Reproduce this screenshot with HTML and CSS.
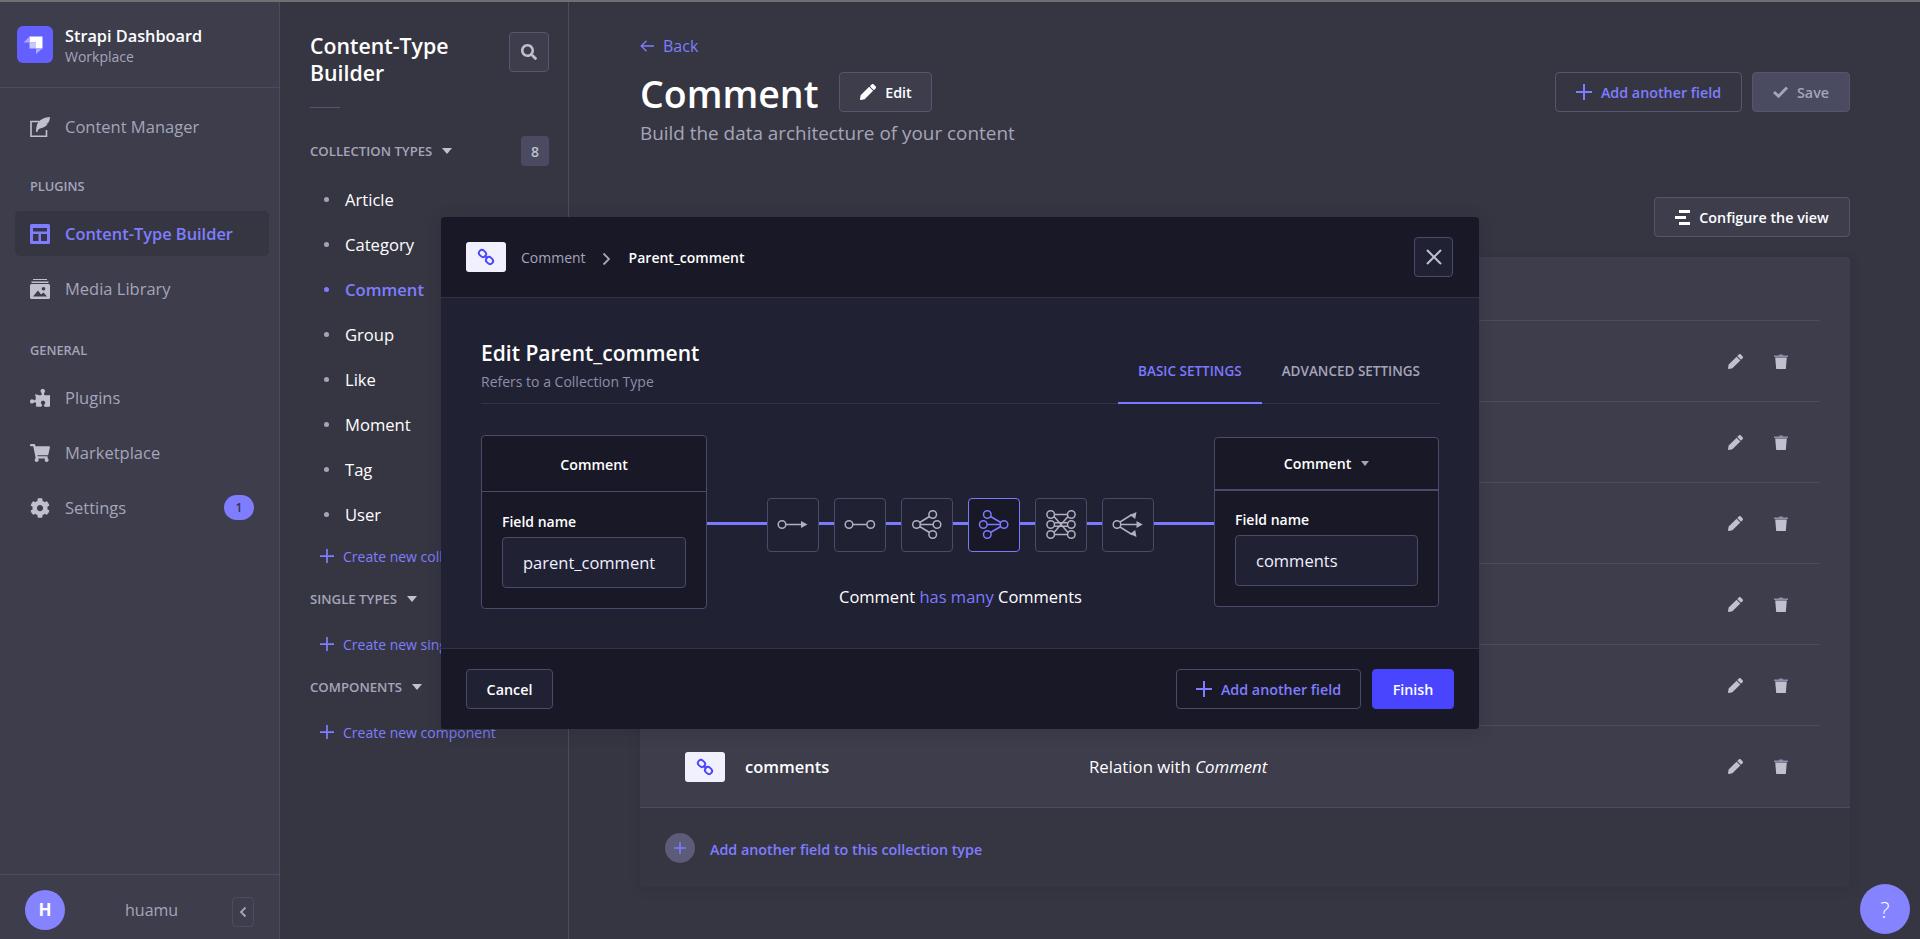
FILE: index.html
```html
<!DOCTYPE html>
<html lang="en">
<head>
    <meta charset="UTF-8">
    <title>Strapi Dashboard</title>
    <link rel="stylesheet" href="styles.css">
</head>
<body>
    <svg class="sprites" width="0" height="0">
        <defs>
            <symbol id="i-pencil" viewBox="0 0 512 512"><path fill="currentColor" d="M497.9 142.1l-46.1 46.1c-4.7 4.7-12.3 4.7-17 0l-111-111c-4.7-4.7-4.7-12.3 0-17l46.1-46.1c18.7-18.7 49.1-18.7 67.9 0l60.1 60.1c18.8 18.7 18.8 49.1 0 67.9zM284.2 99.8L21.6 362.4.4 483.9c-2.9 16.4 11.4 30.6 27.8 27.8l121.5-21.3 262.6-262.6c4.7-4.7 4.7-12.3 0-17l-111-111c-4.8-4.7-12.4-4.7-17.1 0z"/></symbol>
            <symbol id="i-trash" viewBox="0 0 14 15"><path fill="#8e8ea9" d="M0 1.6h4.6L5.3.6h3.4l.7 1H14V3H0z"/><path fill="currentColor" d="M1.2 3.6h11.6L11.8 15H2.2z"/></symbol>
            <symbol id="i-plus" viewBox="0 0 16 16"><path fill="currentColor" d="M7 0h2v7h7v2H9v7H7V9H0V7h7z"/></symbol>
            <symbol id="i-link" viewBox="0 0 40 30"><g fill="none" stroke="#4945ff" stroke-width="1.9"><rect x="12.7" y="8.5" width="7.6" height="6" rx="3" transform="rotate(45 16.500 11.500)"/><rect x="19.7" y="15.500" width="7.6" height="6" rx="3" transform="rotate(45 23.500 18.500)"/><path d="M18.500 13.500l3 3"/></g></symbol>
            <symbol id="i-caret" viewBox="0 0 10 6"><path fill="currentColor" d="M0 0h10L5 6z"/></symbol>
        </defs>
    </svg>

    <div class="sidebar">
        <div class="brand">
            <svg class="brand-logo" viewBox="0 0 36 37">
                <rect width="36" height="37" rx="6" fill="#6360ff"/>
                <path fill="#fff" d="M12.500 10.500h13v12H19v-6h-6.500z"/>
                <path fill="#c9c8ff" d="M12.500 16.500H19v6h-6.500z"/>
                <path fill="#a9a7ff" d="M12.500 10.500v6h-6zM19 22.500h6.500L19 28z"/>
            </svg>
            <div class="brand-text">
                <div class="brand-title">Strapi Dashboard</div>
                <div class="brand-sub">Workplace</div>
            </div>
        </div>

        <div class="nav">
            <a class="nav-item" href="#">
                <svg class="nav-icon" viewBox="0 0 20 20"><path fill="none" stroke="currentColor" stroke-width="1.6" d="M9 4.500H1v14.700h15.500V13"/><path fill="currentColor" d="M20 0c-7 .6-11.500 3-13.200 8.500-.6 2-.8 4.200-.8 6.500h1.300c.4-1.700 1.300-3.100 2.700-3.600 3.700-.5 6.600-2.500 8-5.200L15.500 7l3-1.500C19.400 4 19.800 2 20 0z"/></svg>
                Content Manager
            </a>

            <div class="nav-label">Plugins</div>
            <a class="nav-item active" href="#">
                <svg class="nav-icon" viewBox="0 0 20 20"><path fill="currentColor" fill-rule="evenodd" d="M1.500 0h17A1.500 1.500 0 0 1 20 1.500v17a1.500 1.500 0 0 1-1.500 1.500h-17A1.500 1.500 0 0 1 0 18.500v-17A1.500 1.500 0 0 1 1.500 0zM3 4v3.500h14V4zM3 10v7h5.500v-7zm8 0v7h6v-7z"/></svg>
                Content-Type Builder
            </a>
            <a class="nav-item" href="#">
                <svg class="nav-icon" viewBox="0 0 20 20"><path fill="currentColor" fill-rule="evenodd" d="M3 0h14v1H3zM1.500 2.500h17V4h-17zM1.500 5h17A1.500 1.500 0 0 1 20 6.500v12a1.500 1.500 0 0 1-1.500 1.500h-17A1.500 1.500 0 0 1 0 18.500v-12A1.500 1.500 0 0 1 1.500 5zM13.500 8a1.800 1.800 0 1 0 0 3.600 1.800 1.800 0 0 0 0-3.600zM3 17.500h14l-3.500-4-2.500 2-3-4z"/></svg>
                Media Library
            </a>

            <div class="nav-label second">General</div>
            <a class="nav-item" href="#">
                <svg class="nav-icon" viewBox="0 0 576 512"><path transform="matrix(-1 0 0 1 576 0)" fill="currentColor" d="M519.442 288.651c-41.519 0-59.5 31.593-82.058 31.593C377.409 320.244 432 144 432 144s-196.288 80-196.288-3.297c0-35.827 36.288-46.25 36.288-85.985C272 19.216 243.885 0 210.539 0c-34.654 0-66.366 18.891-66.366 56.346 0 41.364 31.711 59.277 31.711 81.75C175.885 207.719 0 166.758 0 166.758v333.237s178.635 41.047 178.635-28.662c0-22.473-40-40.107-40-81.471 0-37.456 29.25-56.346 63.577-56.346 33.673 0 61.788 19.216 61.788 54.717 0 39.735-36.288 50.158-36.288 85.985 0 60.803 129.675 25.73 181.23 25.73 0 0-34.725-120.101 25.827-120.101 35.962 0 46.423 36.152 86.308 36.152C556.712 416 576 387.99 576 354.443c0-34.199-18.962-65.792-56.558-65.792z"/></svg>
                Plugins
            </a>
            <a class="nav-item" href="#">
                <svg class="nav-icon" viewBox="0 0 576 512"><path fill="currentColor" d="M528.12 301.319l47.273-208C578.806 78.301 567.391 64 551.99 64H159.208l-9.166-44.81C147.758 8.021 137.93 0 126.529 0H24C10.745 0 0 10.745 0 24v16c0 13.255 10.745 24 24 24h69.883l70.248 343.435C147.325 417.1 136 435.222 136 456c0 30.928 25.072 56 56 56s56-25.072 56-56c0-15.674-6.447-29.835-16.824-40h209.647C430.447 426.165 424 440.326 424 456c0 30.928 25.072 56 56 56s56-25.072 56-56c0-22.172-12.888-41.332-31.579-50.405l5.517-24.276c3.413-15.018-8.002-29.319-23.403-29.319H218.117l-6.545-32h293.145c11.206 0 20.92-7.754 23.403-18.681z"/></svg>
                Marketplace
            </a>
            <a class="nav-item" href="#">
                <svg class="nav-icon" viewBox="0 0 512 512"><path fill="currentColor" d="M487.4 315.7l-42.6-24.6c4.3-23.2 4.3-47 0-70.2l42.6-24.6c4.9-2.8 7.1-8.6 5.5-14-11.1-35.6-30-67.8-54.7-94.6-3.8-4.1-10-5.1-14.8-2.3L380.8 110c-17.9-15.4-38.5-27.3-60.8-35.1V25.8c0-5.6-3.9-10.5-9.4-11.7-36.7-8.2-74.3-7.8-109.2 0-5.5 1.2-9.4 6.1-9.4 11.7V75c-22.2 7.9-42.8 19.8-60.8 35.1L88.7 85.5c-4.9-2.8-11-1.9-14.8 2.3-24.7 26.7-43.6 58.9-54.7 94.6-1.7 5.4.6 11.2 5.5 14L67.3 221c-4.3 23.2-4.3 47 0 70.2l-42.6 24.6c-4.9 2.8-7.1 8.6-5.5 14 11.1 35.6 30 67.8 54.7 94.6 3.8 4.1 10 5.1 14.8 2.3l42.6-24.6c17.9 15.4 38.5 27.3 60.8 35.1v49.2c0 5.6 3.9 10.5 9.4 11.7 36.7 8.2 74.3 7.8 109.2 0 5.5-1.2 9.4-6.1 9.4-11.7v-49.2c22.2-7.9 42.8-19.8 60.8-35.1l42.6 24.6c4.9 2.8 11 1.9 14.8-2.3 24.7-26.7 43.6-58.9 54.7-94.6 1.5-5.5-.7-11.3-5.6-14.1zM256 336c-44.1 0-80-35.9-80-80s35.9-80 80-80 80 35.9 80 80-35.9 80-80 80z"/></svg>
                Settings
                <span class="nav-badge">1</span>
            </a>
        </div>

        <div class="user-bar">
            <div class="avatar">H</div>
            <div class="user-name">huamu</div>
            <button class="collapse-btn"><svg width="8" height="12" viewBox="0 0 8 12"><path fill="none" stroke="currentColor" stroke-width="1.8" d="M6.500 1.500 2 6l4.500 4.500"/></svg></button>
        </div>
    </div>

    <div class="subnav">
        <div class="subnav-head">
            <div class="subnav-title">Content-Type Builder</div>
            <button class="search-btn"><svg width="16" height="16" viewBox="0 0 512 512"><path fill="currentColor" d="M505 442.7L405.3 343c-4.5-4.5-10.6-7-17-7H372c27.6-35.3 44-79.7 44-128C416 93.1 322.9 0 208 0S0 93.1 0 208s93.1 208 208 208c48.3 0 92.7-16.4 128-44v16.3c0 6.4 2.5 12.5 7 17l99.7 99.7c9.4 9.4 24.6 9.4 33.9 0l28.3-28.3c9.4-9.4 9.4-24.6.1-34zM208 336c-70.7 0-128-57.2-128-128 0-70.7 57.2-128 128-128 70.7 0 128 57.2 128 128 0 70.7-57.2 128-128 128z"/></svg></button>
        </div>
        <div class="subnav-rule"></div>

        <div class="group-head first">
            <span>Collection Types</span>
            <svg class="group-caret"><use href="#i-caret"/></svg>
            <span class="group-count">8</span>
        </div>
        <ul class="type-list">
            <li>Article</li>
            <li>Category</li>
            <li class="active">Comment</li>
            <li>Group</li>
            <li>Like</li>
            <li>Moment</li>
            <li>Tag</li>
            <li>User</li>
        </ul>
        <a class="create-link near" href="#"><svg width="14" height="14"><use href="#i-plus"/></svg>Create new collection type</a>

        <div class="group-head"><span>Single Types</span><svg class="group-caret"><use href="#i-caret"/></svg></div>
        <a class="create-link" href="#"><svg width="14" height="14"><use href="#i-plus"/></svg>Create new single type</a>

        <div class="group-head"><span>Components</span><svg class="group-caret"><use href="#i-caret"/></svg></div>
        <a class="create-link" href="#"><svg width="14" height="14"><use href="#i-plus"/></svg>Create new component</a>
    </div>

    <div class="main">
        <a class="back-link" href="#"><svg width="14" height="12" viewBox="0 0 14 12"><path fill="none" stroke="currentColor" stroke-width="1.3" d="M6.500.8 1.200 6l5.300 5.200M1.200 6H14"/></svg>Back</a>

        <div class="page-head">
            <div>
                <div class="page-title-row">
                    <h1 class="page-title">Comment</h1>
                    <button class="btn edit-btn"><svg width="16" height="16"><use href="#i-pencil"/></svg>Edit</button>
                </div>
                <div class="page-sub">Build the data architecture of your content</div>
            </div>
            <div class="page-actions">
                <button class="btn btn-accent"><svg width="16" height="16"><use href="#i-plus"/></svg>Add another field</button>
                <button class="btn btn-save"><svg width="15" height="12" viewBox="0 0 15 12"><path fill="none" stroke="currentColor" stroke-width="2.8" d="M1 6l4.500 4.300L14 1.500"/></svg>Save</button>
            </div>
        </div>

        <div class="view-bar">
            <button class="btn btn-view"><svg width="15" height="15" viewBox="0 0 15 15"><path fill="currentColor" d="M4 0h11v3H4zM0 6h11v3H0zM4 12h11v3H4z"/></svg>Configure the view</button>
        </div>

        <div class="fields-card">
            <div class="field-head"></div>
            <div class="field-row"><div class="row-actions"><svg class="act-edit"><use href="#i-pencil"/></svg><svg class="act-del"><use href="#i-trash"/></svg></div></div>
            <div class="field-row"><div class="row-actions"><svg class="act-edit"><use href="#i-pencil"/></svg><svg class="act-del"><use href="#i-trash"/></svg></div></div>
            <div class="field-row"><div class="row-actions"><svg class="act-edit"><use href="#i-pencil"/></svg><svg class="act-del"><use href="#i-trash"/></svg></div></div>
            <div class="field-row"><div class="row-actions"><svg class="act-edit"><use href="#i-pencil"/></svg><svg class="act-del"><use href="#i-trash"/></svg></div></div>
            <div class="field-row"><div class="row-actions"><svg class="act-edit"><use href="#i-pencil"/></svg><svg class="act-del"><use href="#i-trash"/></svg></div></div>
            <div class="field-row last">
                <span class="type-tile"><svg width="40" height="30"><use href="#i-link"/></svg></span>
                <span class="field-name">comments</span>
                <span class="field-type">Relation with <em>Comment</em></span>
                <div class="row-actions"><svg class="act-edit"><use href="#i-pencil"/></svg><svg class="act-del"><use href="#i-trash"/></svg></div>
            </div>
            <div class="card-foot">
                <span class="add-circle"><svg width="12" height="12"><use href="#i-plus"/></svg></span>
                <span class="foot-text">Add another field to this collection type</span>
            </div>
        </div>
    </div>

    <div class="help-btn">?</div>

    <div class="modal">
        <div class="modal-top">
            <span class="type-tile"><svg width="40" height="30"><use href="#i-link"/></svg></span>
            <span class="crumb">Comment</span>
            <svg class="crumb-sep" width="9" height="14" viewBox="0 0 9 14"><path fill="none" stroke="currentColor" stroke-width="1.8" d="M1.500 1.500 7 7l-5.500 5.500"/></svg>
            <span class="crumb-current">Parent_comment</span>
            <button class="close-btn"><svg width="16" height="16" viewBox="0 0 16 16"><path fill="none" stroke="currentColor" stroke-width="2" d="M1 1l14 14M15 1 1 15"/></svg></button>
        </div>

        <div class="modal-body">
            <div class="modal-heading">
                <div>
                    <div class="modal-title">Edit Parent_comment</div>
                    <div class="modal-sub">Refers to a Collection Type</div>
                </div>
                <div class="tabs">
                    <div class="tab active">Basic Settings</div>
                    <div class="tab">Advanced Settings</div>
                </div>
            </div>

            <div class="relation">
                <div class="rel-box">
                    <div class="rel-box-head">Comment</div>
                    <div class="rel-box-body">
                        <label class="rel-label">Field name</label>
                        <div class="rel-input">parent_comment</div>
                    </div>
                </div>

                <div class="rel-mid">
                    <div class="rel-line">
                        <span class="rel-seg long"></span>
                        <button class="rel-btn"><svg viewBox="1 0 50 50"><circle cx="15" cy="24.500" r="3.800"/><path d="M19 24.500h17"/><path class="head" d="M34 21l6.500 3.500-6.500 3.500z"/></svg></button>
                        <span class="rel-seg"></span>
                        <button class="rel-btn"><svg viewBox="1 0 50 50"><circle cx="15" cy="24.500" r="3.800"/><circle cx="36.700" cy="24.500" r="3.800"/><path d="M19 24.500h14"/></svg></button>
                        <span class="rel-seg"></span>
                        <button class="rel-btn"><svg viewBox="1 0 50 50"><circle cx="15.500" cy="24.500" r="3.800"/><circle cx="31.700" cy="14.500" r="3.800"/><circle cx="36" cy="24.500" r="3.800"/><circle cx="31.700" cy="34.500" r="3.800"/><path d="M18.700 22.500 28.500 16.500M19.300 24.500h13M18.700 26.500l9.800 6"/></svg></button>
                        <span class="rel-seg"></span>
                        <button class="rel-btn active"><svg viewBox="1 0 50 50"><circle cx="36" cy="24.500" r="3.800"/><circle cx="19.300" cy="14.500" r="3.800"/><circle cx="15.300" cy="24.500" r="3.800"/><circle cx="19.300" cy="34.500" r="3.800"/><path d="M32.800 22.500 22.500 16.500M32.200 24.500h-13M32.800 26.500l-10.300 6"/></svg></button>
                        <span class="rel-seg"></span>
                        <button class="rel-btn"><svg viewBox="1 0 50 50"><circle cx="15.700" cy="14.500" r="3.800"/><circle cx="15.700" cy="24.500" r="3.800"/><circle cx="15.700" cy="34.500" r="3.800"/><circle cx="36.300" cy="14.500" r="3.800"/><circle cx="36.300" cy="24.500" r="3.800"/><circle cx="36.300" cy="34.500" r="3.800"/><path d="M19.500 14.500h13M19.500 34.500h13M19.500 22.800h13M19.500 26.200h13M19 16.500l14 16M33 16.500l-14 16"/></svg></button>
                        <span class="rel-seg"></span>
                        <button class="rel-btn"><svg viewBox="1 0 50 50"><circle cx="15" cy="24.500" r="3.800"/><path d="M19 24.500h17M18 22l12-7.500M18 27l12 7.500"/><path class="head" d="M34.500 21l6.200 3.500-6.200 3.500zM34.500 12l-1.300 7-5.300-4zM34.500 37l-1.300-7-5.300 4z"/></svg></button>
                        <span class="rel-seg long"></span>
                    </div>
                    <div class="rel-caption">Comment <span>has many</span> Comments</div>
                </div>

                <div class="rel-box right">
                    <div class="rel-box-head">Comment<svg class="head-caret"><use href="#i-caret"/></svg></div>
                    <div class="rel-box-body">
                        <label class="rel-label">Field name</label>
                        <div class="rel-input">comments</div>
                    </div>
                </div>
            </div>
        </div>

        <div class="modal-foot">
            <button class="btn btn-cancel">Cancel</button>
            <div class="foot-right">
                <button class="btn btn-accent"><svg width="16" height="16"><use href="#i-plus"/></svg>Add another field</button>
                <button class="btn btn-finish">Finish</button>
            </div>
        </div>
    </div>
</body>
</html>
```
FILE: styles.css
```css
* {
    box-sizing: border-box;
}
body {
    font-family: "Open Sans", "Noto Sans", sans-serif;
    background: #363642;
    color: white;
    margin: 0;
    display: flex;
    height: 100vh;
    overflow: hidden;
    border-top: 2px solid #6f6f74;
    position: relative;
}
a {
    text-decoration: none;
    color: inherit;
}
button {
    font-family: inherit;
    cursor: pointer;
}
.sprites {
    position: absolute;
}

/* Left sidebar */
.sidebar {
    width: 280px;
    flex-shrink: 0;
    background: #3d3d4c;
    border-right: 1px solid #4c4c5f;
    display: flex;
    flex-direction: column;
}
.brand {
    height: 86px;
    display: flex;
    align-items: center;
    gap: 12px;
    padding: 0 17px;
    border-bottom: 1px solid #4c4c5f;
}
.brand-logo {
    width: 36px;
    height: 37px;
}
.brand-text {
    padding-top: 3px;
}
.brand-title {
    font-size: 16.3px;
    font-weight: 600;
    line-height: 21px;
}
.brand-sub {
    font-size: 14px;
    color: #a5a5ba;
    line-height: 20px;
}
.nav {
    flex: 1;
    padding: 16px 10px 0 15px;
    display: flex;
    flex-direction: column;
}
.nav-item {
    height: 45px;
    margin-bottom: 10px;
    border-radius: 5px;
    padding: 0 15px;
    display: flex;
    align-items: center;
    gap: 15px;
    font-size: 16.5px;
    color: #a5a5ba;
}
.nav-item.active {
    background: #363642;
    color: #7f7dff;
    font-weight: 600;
    font-size: 16.4px;
}
.nav-icon {
    width: 20px;
    height: 20px;
    color: #c0c0cf;
}
.nav-item.active .nav-icon {
    color: #7f7dff;
}
.nav-label {
    margin: 19px 0 17px 15px;
    height: 16px;
    line-height: 16px;
    font-size: 12.8px;
    font-weight: 600;
    text-transform: uppercase;
    color: #a5a5ba;
}
.nav-label.second {
    margin: 21px 0 17px 15px;
}
.nav-badge {
    margin-left: auto;
    width: 30px;
    height: 25px;
    border-radius: 13px;
    background: #7f7dff;
    color: #32324d;
    font-size: 12px;
    font-weight: 600;
    display: flex;
    align-items: center;
    justify-content: center;
}
.user-bar {
    height: 65px;
    border-top: 1px solid #4c4c5f;
    display: flex;
    align-items: center;
    padding: 5px 25px 0;
    position: relative;
}
.avatar {
    width: 40px;
    height: 40px;
    border-radius: 50%;
    background: #8583ff;
    display: flex;
    align-items: center;
    justify-content: center;
    font-size: 17px;
    font-weight: 700;
}
.user-name {
    margin-left: 60px;
    font-size: 16px;
    color: #a5a5ba;
}
.collapse-btn {
    position: absolute;
    left: 232px;
    top: 22px;
    width: 22px;
    height: 30px;
    border: 1px solid #4c4c5f;
    border-radius: 4px;
    background: #3d3d4c;
    color: #a5a5ba;
    padding: 0;
    display: flex;
    align-items: center;
    justify-content: center;
}

/* Content-type list */
.subnav {
    width: 289px;
    flex-shrink: 0;
    border-right: 1px solid #4c4c5f;
    padding: 30px 19px 0 30px;
}
.subnav-head {
    display: flex;
    justify-content: space-between;
    align-items: flex-start;
}
.subnav-title {
    width: 160px;
    font-size: 21.3px;
    font-weight: 600;
    line-height: 27px;
}
.search-btn {
    width: 40px;
    height: 40px;
    border: 1px solid #55556e;
    border-radius: 4px;
    background: #3d3d4c;
    color: #c0c0cf;
    padding: 0;
    display: flex;
    align-items: center;
    justify-content: center;
}
.subnav-rule {
    width: 30px;
    height: 1px;
    margin-top: 21px;
    background: #55556e;
}
.group-head {
    display: flex;
    align-items: center;
    height: 16px;
    margin-top: 25px;
    font-size: 13.2px;
    font-weight: 600;
    text-transform: uppercase;
    color: #a5a5ba;
}
.group-head.first {
    margin-top: 35px;
}
.group-caret {
    width: 10px;
    height: 6px;
    margin-left: 10px;
    color: #c0c0cf;
}
.group-count {
    margin-left: auto;
    width: 28px;
    height: 30px;
    border-radius: 4px;
    background: #4a4a60;
    color: #c0c0cf;
    font-size: 14px;
    display: flex;
    align-items: center;
    justify-content: center;
}
.type-list {
    list-style: none;
    margin: 18px 0 0;
    padding: 0;
}
.type-list li {
    height: 45px;
    line-height: 45px;
    font-size: 16.6px;
    padding-left: 35px;
    position: relative;
}
.type-list li::before {
    content: "";
    position: absolute;
    left: 14px;
    top: 20px;
    width: 5px;
    height: 5px;
    border-radius: 50%;
    background: #a5a5ba;
}
.type-list li.active {
    color: #7f7dff;
    font-weight: 600;
}
.type-list li.active::before {
    background: #7f7dff;
}
.create-link {
    display: flex;
    align-items: center;
    gap: 9px;
    height: 20px;
    margin: 27px 0 0 10px;
    font-size: 14px;
    color: #7f7dff;
    white-space: nowrap;
}
.create-link.near {
    margin-top: 9px;
}

/* Main column */
.main {
    flex: 1;
    padding: 34px 70px 0 71px;
    min-width: 0;
}
.back-link {
    display: flex;
    align-items: center;
    gap: 9px;
    height: 20px;
    font-size: 16px;
    color: #7f7dff;
}
.page-head {
    display: flex;
    justify-content: space-between;
    margin-top: 16px;
}
.page-title-row {
    display: flex;
    align-items: center;
    gap: 21px;
}
.page-title {
    margin: 4px 0 0;
    font-size: 37.5px;
    font-weight: 600;
    line-height: 36px;
}
.page-sub {
    margin-top: 9px;
    font-size: 18.9px;
    color: #a5a5ba;
    line-height: 24px;
}
.btn {
    height: 40px;
    border: 1px solid #55556e;
    border-radius: 4px;
    background: #3d3d4c;
    color: white;
    font-size: 14.3px;
    font-weight: 600;
    padding: 0;
    display: inline-flex;
    align-items: center;
    justify-content: center;
    gap: 9px;
    white-space: nowrap;
}
.edit-btn {
    width: 93px;
}
.page-actions {
    display: flex;
    gap: 10px;
}
.btn-accent {
    width: 187px;
    background: transparent;
    color: #7f7dff;
}
.btn-save {
    width: 98px;
    background: #4a4a60;
    color: #a5a5ba;
}
.btn-view {
    width: 196px;
}
.view-bar {
    display: flex;
    justify-content: flex-end;
    margin-top: 52px;
}
.fields-card {
    margin-top: 20px;
    background: #3d3d4c;
    border-radius: 4px;
    box-shadow: 0 2px 12px rgba(30, 30, 45, 0.15);
}
.field-head {
    height: 64px;
    margin-right: 30px;
    border-bottom: 1px solid #4c4c5f;
}
.field-row {
    height: 81px;
    margin-right: 30px;
    border-bottom: 1px solid #4c4c5f;
    padding-left: 45px;
    display: flex;
    align-items: center;
}
.field-row.last {
    margin-right: 0;
    padding-right: 30px;
    height: 82px;
}
.type-tile {
    width: 40px;
    height: 30px;
    border-radius: 3px;
    background: #f0f0ff;
    flex-shrink: 0;
    display: block;
}
.type-tile svg {
    display: block;
}
.field-name {
    width: 344px;
    margin-left: 20px;
    font-size: 16.5px;
    font-weight: 600;
}
.field-type {
    font-size: 16.8px;
}
.row-actions {
    margin-left: auto;
    display: flex;
    align-items: center;
    gap: 31px;
    padding-right: 32px;
    color: #c0c0cf;
}
.act-edit {
    width: 15px;
    height: 15px;
}
.act-del {
    width: 14px;
    height: 15px;
}
.card-foot {
    height: 79px;
    background: #363642;
    border-radius: 0 0 4px 4px;
    padding-left: 25px;
    display: flex;
    align-items: center;
    font-size: 14.3px;
    font-weight: 600;
    color: #7f7dff;
}
.foot-text {
    padding-top: 4px;
}
.add-circle {
    width: 30px;
    height: 30px;
    margin-right: 15px;
    border-radius: 50%;
    background: #5c5c78;
    display: flex;
    align-items: center;
    justify-content: center;
}
.help-btn {
    position: absolute;
    left: 1860px;
    top: 882px;
    width: 50px;
    height: 50px;
    border-radius: 50%;
    background: #8583ff;
    font-size: 22px;
    font-weight: 300;
    display: flex;
    align-items: center;
    justify-content: center;
}

/* Relation dialog */
.modal {
    position: absolute;
    left: 441px;
    top: 215px;
    width: 1038px;
    height: 512px;
    border-radius: 4px;
    background: #212134;
    box-shadow: 0 2px 15px rgba(33, 33, 52, 0.25);
    display: flex;
    flex-direction: column;
    overflow: hidden;
}
.modal-top {
    height: 81px;
    background: #181826;
    border-bottom: 1px solid #32324d;
    padding: 0 26px 0 25px;
    display: flex;
    align-items: center;
    font-size: 14px;
}
.crumb {
    margin-left: 15px;
    color: #a5a5ba;
}
.crumb-sep {
    margin: 3px 18px 0 16px;
    color: #a5a5ba;
}
.crumb-current {
    font-weight: 600;
}
.close-btn {
    margin-left: auto;
    width: 39px;
    height: 40px;
    border: 1px solid #4a4a6a;
    border-radius: 4px;
    background: #212134;
    color: #c0c0cf;
    padding: 0;
    display: flex;
    align-items: center;
    justify-content: center;
}
.modal-body {
    flex: 1;
    padding: 0 39px 0 40px;
}
.modal-heading {
    height: 106px;
    border-bottom: 1px solid #32324d;
    display: flex;
    justify-content: space-between;
    align-items: flex-end;
}
.modal-title {
    font-size: 21px;
    font-weight: 600;
    line-height: 28px;
}
.modal-sub {
    font-size: 14px;
    color: #8e8ea9;
    line-height: 19px;
    margin-top: 5px;
    margin-bottom: 12px;
}
.tabs {
    display: flex;
}
.tab {
    height: 64px;
    line-height: 63px;
    padding: 0 20px;
    font-size: 13.5px;
    font-weight: 600;
    text-transform: uppercase;
    color: #a5a5ba;
    margin-bottom: -1px;
}
.tab.active {
    color: #7b79ff;
    border-bottom: 2px solid #7b79ff;
}
.relation {
    margin: 31px 1px 0 0;
    height: 174px;
    display: flex;
    align-items: center;
}
.rel-box {
    width: 226px;
    height: 174px;
    border: 1px solid #4a4a6a;
    border-radius: 4px;
    background: #181826;
    flex-shrink: 0;
}
.rel-box.right {
    width: 225px;
    height: 170px;
}
.rel-box-head {
    height: 56px;
    padding-top: 2px;
    border-bottom: 1px solid #4a4a6a;
    display: flex;
    align-items: center;
    justify-content: center;
    font-size: 14.2px;
    font-weight: 600;
}
.right .rel-box-head {
    height: 53px;
    padding-top: 0;
    border-bottom-width: 2px;
}
.head-caret {
    width: 8px;
    height: 5px;
    margin-left: 10px;
    color: #a5a5ba;
}
.rel-box-body {
    padding: 20px 20px 0;
}
.right .rel-box-body {
    padding-top: 19px;
}
.rel-label {
    display: block;
    font-size: 14px;
    font-weight: 600;
    line-height: 20px;
}
.rel-input {
    height: 51px;
    margin-top: 5px;
    border: 1px solid #4a4a6a;
    border-radius: 4px;
    background: #212134;
    padding-left: 20px;
    font-size: 16.5px;
    line-height: 50px;
    color: #f0f0ff;
}
.rel-mid {
    flex: 1;
    align-self: stretch;
    padding-top: 63px;
}
.rel-line {
    display: flex;
    align-items: flex-start;
}
.rel-seg {
    width: 15px;
    height: 3px;
    margin-top: 24px;
    background: #7b79ff;
}
.rel-seg.long {
    width: 60px;
}
.rel-btn {
    width: 52px;
    height: 54px;
    flex-shrink: 0;
    border: 1px solid #4a4a6a;
    border-radius: 4px;
    background: #212134;
    padding: 0;
    color: #b0b0c2;
    display: block;
}
.rel-btn svg {
    display: block;
    width: 50px;
    height: 50px;
    fill: none;
    stroke: currentColor;
    stroke-width: 1.5;
}
.rel-btn .head {
    fill: currentColor;
    stroke: none;
}
.rel-btn.active {
    border-color: #7b79ff;
    background: #181826;
    color: #7b79ff;
}
.rel-caption {
    margin-top: 34px;
    text-align: center;
    font-size: 16.5px;
    line-height: 22px;
}
.rel-caption span {
    color: #7b79ff;
}
.modal-foot {
    height: 81px;
    background: #181826;
    border-top: 1px solid #32324d;
    padding: 0 25px;
    display: flex;
    justify-content: space-between;
    align-items: center;
}
.modal-foot .btn {
    background: #212134;
    border-color: #4a4a6a;
}
.modal-foot .btn-cancel {
    width: 87px;
}
.modal-foot .btn-accent {
    width: 185px;
    background: transparent;
}
.foot-right {
    display: flex;
    gap: 11px;
}
.modal-foot .btn-finish {
    width: 82px;
    background: #4945ff;
    border-color: #4945ff;
}
```
